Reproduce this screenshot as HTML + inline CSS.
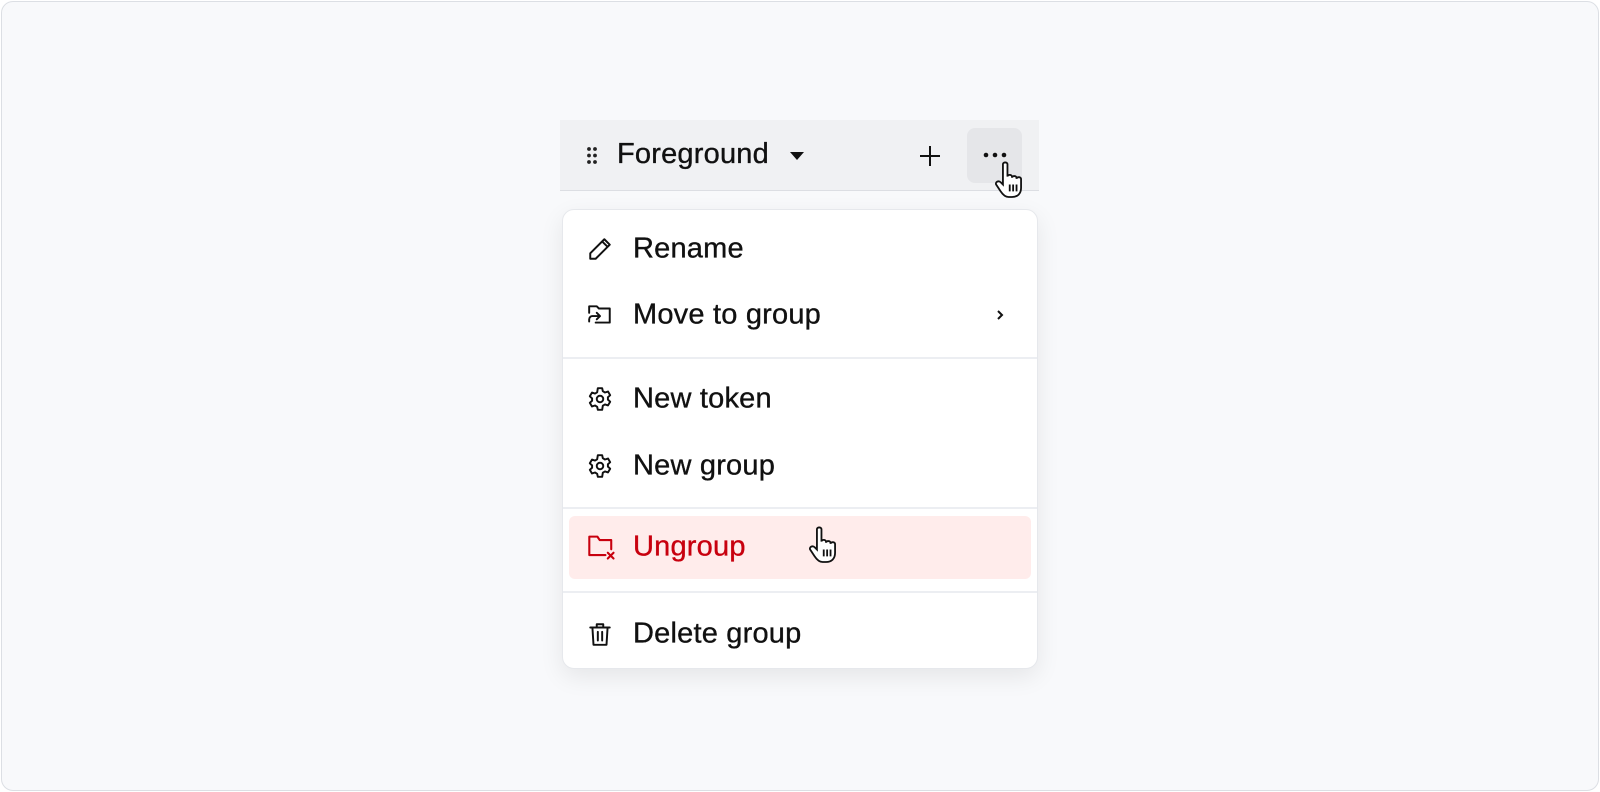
<!DOCTYPE html>
<html><head><meta charset="utf-8"><style>
html,body{margin:0;padding:0;width:1600px;height:792px;overflow:hidden;background:#fff;font-family:"Liberation Sans",sans-serif;}
.frame{position:absolute;left:1px;top:1px;width:1596px;height:788px;border:1px solid #dcdfe4;border-radius:12px;background:#f8f9fb;}
.hdr{position:absolute;left:560px;top:120px;width:479px;height:70px;background:#f0f1f3;border-bottom:1px solid #dcdee3;}
.abs{position:absolute;}
.menu{position:absolute;left:562px;top:209px;width:476px;height:460px;background:#fff;border:1px solid #e6e8ec;border-radius:12px;box-shadow:0 8px 24px rgba(0,0,0,0.08);box-sizing:border-box;}
.item{position:absolute;left:0;width:100%;height:40px;font-size:29px;letter-spacing:0.2px;color:#111;-webkit-text-stroke:0.35px currentColor;}
.item span{position:absolute;left:70px;top:50%;transform:translateY(-50%);}
.item svg{position:absolute;left:24px;top:50%;transform:translateY(-50%);}
.div{position:absolute;left:0;width:100%;height:2px;background:#eceef2;}
</style></head><body>
<div class="frame"></div>
<div class="hdr">
  <svg class="abs" style="left:27px;top:27px" width="10" height="17" viewBox="0 0 10 17"><g fill="#222"><circle cx="2" cy="2" r="1.9"/><circle cx="8" cy="2" r="1.9"/><circle cx="2" cy="8.5" r="1.9"/><circle cx="8" cy="8.5" r="1.9"/><circle cx="2" cy="15" r="1.9"/><circle cx="8" cy="15" r="1.9"/></g></svg>
  <div class="abs" style="left:57px;top:18px;font-size:29px;letter-spacing:0.2px;color:#111;-webkit-text-stroke:0.35px #111;">Foreground</div>
  <svg class="abs" style="left:230px;top:32px" width="14" height="8" viewBox="0 0 14 8"><path d="M0 0H14L7 8Z" fill="#111"/></svg>
  <svg class="abs" style="left:360px;top:26px" width="20" height="20" viewBox="0 0 20 20"><path d="M10 0V20M0 10H20" stroke="#111" stroke-width="2"/></svg>
  <div class="abs" style="left:407px;top:8px;width:55px;height:55px;border-radius:8px;background:#e5e6e9;"></div>
  <svg class="abs" style="left:423px;top:32px" width="24" height="6" viewBox="0 0 24 6"><g fill="#111"><circle cx="3" cy="3" r="2.3"/><circle cx="12" cy="3" r="2.3"/><circle cx="21" cy="3" r="2.3"/></g></svg>
  <svg class="abs" style="left:435px;top:40px" width="34" height="40" viewBox="0 0 30 34"><path d="M7 3c0-2 4-2 4 0v11c0-2 4-2 4 0v1c0-2 4-2 4 0v1c0-2 4-2 4 0v8c0 5-3 8-8 8h-3c-3 0-5-2-7-5l-4-6c-1-2 2-4 4-2l2 2V3z" fill="#fff" stroke="#111" stroke-width="1.6"/><path d="M13 21v6M16 21v6M19 21v6" stroke="#111" stroke-width="1.6"/></svg>
</div>
<div class="menu">
  <div class="item" style="top:19px"><svg width="26" height="26" viewBox="0 0 24 24" fill="none" stroke="#111" stroke-width="1.8" stroke-linejoin="round"><path d="M16 3l5 5L8 21H3v-5z M14 5l5 5"/></svg><span>Rename</span></div>
  <div class="item" style="top:85px"><svg width="26" height="26" viewBox="0 0 24 24" fill="none" stroke="#111" stroke-width="1.8" stroke-linejoin="round" stroke-linecap="round"><path d="M2 10V4h7l2 2h10v13H8M2 18v-2a3 3 0 0 1 3-3h7M9 10l3 3-3 3"/></svg><span>Move to group</span>
    <svg style="left:432px" width="10" height="14" viewBox="0 0 10 14"><path d="M3 3l4 4-4 4" fill="none" stroke="#111" stroke-width="2"/></svg></div>
  <div class="div" style="top:147px"></div>
  <div class="item" style="top:169px"><svg width="26" height="26" viewBox="0 0 24 24" fill="none" stroke="#111" stroke-width="1.8" stroke-linejoin="round"><circle cx="12" cy="12" r="3"/><path d="M10 2h4l.6 2.8 2 1.2 2.8-.9 2 3.4-2.1 1.9v2.2l2.1 1.9-2 3.4-2.8-.9-2 1.2L14 22h-4l-.6-2.8-2-1.2-2.8.9-2-3.4 2.1-1.900v-2.2L2.6 9.5l2-3.4 2.8.9 2-1.2z"/></svg><span>New token</span></div>
  <div class="item" style="top:236px"><svg width="26" height="26" viewBox="0 0 24 24" fill="none" stroke="#111" stroke-width="1.8" stroke-linejoin="round"><circle cx="12" cy="12" r="3"/><path d="M10 2h4l.6 2.8 2 1.2 2.8-.9 2 3.4-2.1 1.9v2.2l2.1 1.9-2 3.4-2.8-.9-2 1.2L14 22h-4l-.6-2.8-2-1.2-2.8.9-2-3.4 2.1-1.9v-2.2L2.6 9.5l2-3.4 2.8.9 2-1.2z"/></svg><span>New group</span></div>
  <div class="div" style="top:297px"></div>
  <div class="abs" style="left:6px;top:306px;width:462px;height:63px;background:#ffeceb;border-radius:6px;"></div>
  <div class="item" style="top:317px;color:#c8000e"><svg width="30" height="28" viewBox="0 0 26 24" fill="none" stroke="#c8000e" stroke-width="1.8" stroke-linejoin="round" stroke-linecap="round"><path d="M16 19H2V3h7l2 3h10v8"/><path d="M18 17l5 5M23 17l-5 5"/></svg><span>Ungroup</span></div>
  <svg class="abs" style="left:246px;top:315px" width="34" height="40" viewBox="0 0 30 34"><path d="M7 3c0-2 4-2 4 0v11c0-2 4-2 4 0v1c0-2 4-2 4 0v1c0-2 4-2 4 0v8c0 5-3 8-8 8h-3c-3 0-5-2-7-5l-4-6c-1-2 2-4 4-2l2 2V3z" fill="#fff" stroke="#111" stroke-width="1.6"/><path d="M13 21v6M16 21v6M19 21v6" stroke="#111" stroke-width="1.6"/></svg>
  <div class="div" style="top:381px"></div>
  <div class="item" style="top:404px"><svg width="26" height="26" viewBox="0 0 24 24" fill="none" stroke="#111" stroke-width="1.8" stroke-linejoin="round" stroke-linecap="round"><path d="M3 6h18M9 6V3h6v3M5 6l1 16h12l1-16M10 10v8M14 10v8"/></svg><span>Delete group</span></div>
</div>
</body></html>
